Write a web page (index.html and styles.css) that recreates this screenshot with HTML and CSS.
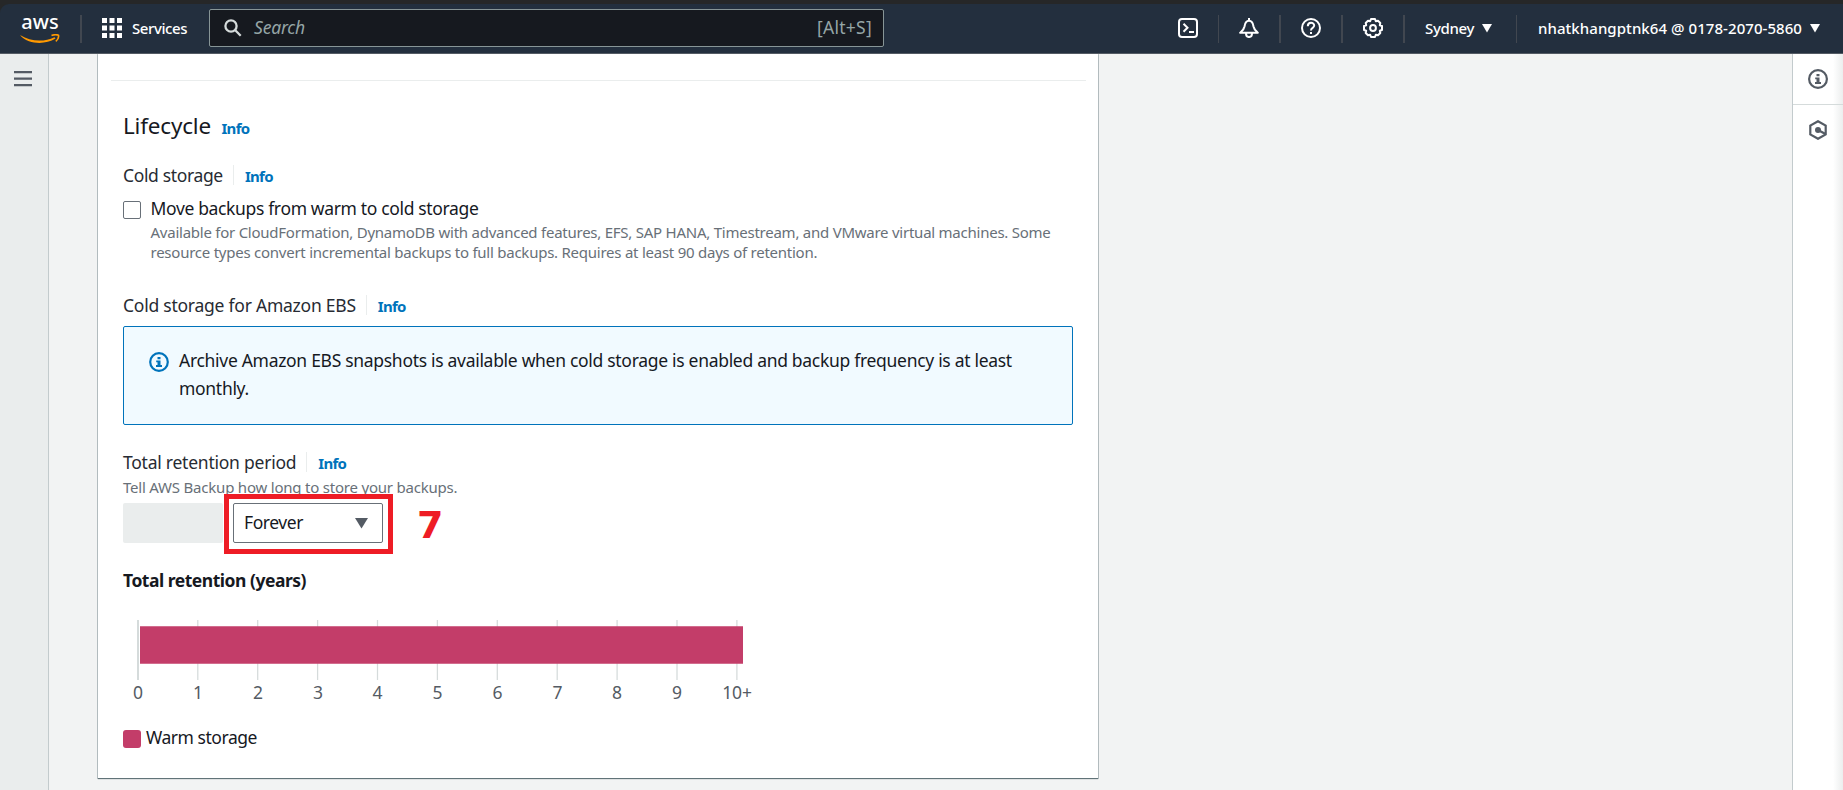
FILE: index.html
```html
<!DOCTYPE html>
<html lang="en">
<head>
<meta charset="utf-8">
<title>AWS Backup</title>
<link rel="stylesheet" href="styles.css">
</head>
<body>
<div class="strip">
<header class="header">
  <div class="logo">
    <span class="logo-text">aws</span>
    <svg class="logo-smile" width="40" height="10" viewBox="0 0 40 10"><path d="M0.5 1.2C10 7.500 24 8.500 34.500 3.200L35.500 4.600C25 11 9 10.500 0.500 1.800Z" fill="#f90"/><path d="M31.500 1.600C34 .6 37 .5 38.500 1.200C38.900 3.300 37.800 5.800 35.800 7.300" fill="none" stroke="#f90" stroke-width="1.600"/></svg>
  </div>
  <i class="sep wide sep-logo"></i>
  <svg class="grid-icon" width="20" height="20" viewBox="0 0 20 20" fill="#fff"><path d="M0 0h5v5H0zM7.500 0h5v5h-5zM15 0h5v5h-5zM0 7.500h5v5H0zM7.500 7.500h5v5h-5zM15 7.500h5v5h-5zM0 15h5v5H0zM7.500 15h5v5h-5zM15 15h5v5h-5z"/></svg>
  <span class="nav-text services">Services</span>
  <div class="search">
    <svg width="18" height="18" viewBox="0 0 18 18" fill="none" stroke="#d5dbdb" stroke-width="2.300"><circle cx="7" cy="7" r="5.600"/><path d="M11 11l5.700 5.700"/></svg>
    <span class="placeholder">Search</span>
    <span class="shortcut">[Alt+S]</span>
  </div>
  <div class="tools">
    <div class="tool first"><svg width="20" height="20" viewBox="0 0 20 20" fill="none" stroke="#fff" stroke-width="2"><rect x="1" y="1" width="18" height="18" rx="3"/><path d="M5.500 5.800L9.500 9.800L5.500 13.800M11 14h5"/></svg></div>
    <i class="sep"></i>
    <div class="tool"><svg width="20" height="20" viewBox="0 0 20 20" fill="none" stroke="#fff" stroke-width="2" stroke-linejoin="round"><path d="M10 0v3M1.200 14.800H18.800C16 12.500 15 11.500 14.500 8.500C14 4.800 12.800 2.800 10 2.800S6 4.800 5.500 8.500C5 11.500 4 12.500 1.200 14.800ZM7 15.500C7 20.200 13 20.200 13 15.500"/></svg></div>
    <i class="sep wide"></i>
    <div class="tool"><svg width="20" height="20" viewBox="0 0 20 20" fill="none" stroke="#fff" stroke-width="2"><circle cx="10" cy="10" r="9"/><path d="M6.800 8.200C6.800 3.800 13.200 3.800 13.200 7.600C13.200 10 10 9.800 10 12.400M10 14v2.100"/></svg></div>
    <i class="sep wide"></i>
    <div class="tool"><svg width="20" height="20" viewBox="0 0 20 20" fill="none" stroke="#fff" stroke-width="2" stroke-linejoin="round"><path d="M8 1h4l.8 2.200L15 2.700L17.300 5L16.800 7.200L19 8v4l-2.200.8L17.300 15L15 17.300L12.800 16.800L12 19H8l-.8-2.200L5 17.300L2.700 15L3.200 12.800L1 12V8l2.200-.8L2.700 5L5 2.700L7.200 3.200Z"/><circle cx="10" cy="10" r="2.900"/></svg></div>
    <i class="sep wide"></i>
    <div class="region"><span class="nav-text">Sydney</span><svg width="10" height="9" viewBox="0 0 10 9"><path d="M0 0h10L5 8.500z" fill="#fff"/></svg></div>
    <i class="sep"></i>
    <div class="account"><span class="nav-text user">nhatkhangptnk64 @ 0178-2070-5860</span><svg width="10" height="9" viewBox="0 0 10 9"><path d="M0 0h10L5 8.500z" fill="#fff"/></svg></div>
  </div>
</header>
</div>
<div class="page">
  <nav class="side"><svg width="18" height="16" viewBox="0 0 18 16" fill="#545b64"><path d="M0 0h18v2.200H0zM0 6.500h18v2.200H0zM0 13h18v2.200H0z"/></svg></nav>
  <main class="main">
    <section class="card">
      <hr class="rule">
      <div class="content">
        <div class="row title"><h2>Lifecycle</h2><a class="info">Info</a></div>
        <div class="row cold"><span class="label">Cold storage</span><i class="bar"></i><a class="info">Info</a></div>
        <div class="check">
          <span class="box"></span>
          <div>
            <div class="check-label">Move backups from warm to cold storage</div>
            <div class="desc">Available for CloudFormation, DynamoDB with advanced features, EFS, SAP HANA, Timestream, and VMware virtual machines. Some<br>resource types convert incremental backups to full backups. Requires at least 90 days of retention.</div>
          </div>
        </div>
        <div class="row ebs"><span class="label">Cold storage for Amazon EBS</span><i class="bar"></i><a class="info">Info</a></div>
        <div class="alert">
          <svg width="20" height="20" viewBox="0 0 20 20"><circle cx="10" cy="10" r="8.800" fill="none" stroke="#0073bb" stroke-width="2.200"/><path d="M8.500 5h3v2.300h-3zM7.200 8.400h4.300v4.700H13V15H7v-1.900h1.500v-2.800H7.200z" fill="#0073bb"/></svg>
          <p>Archive Amazon EBS snapshots is available when cold storage is enabled and backup frequency is at least<br>monthly.</p>
        </div>
        <div class="row period"><span class="label">Total retention period</span><i class="bar"></i><a class="info">Info</a></div>
        <div class="help">Tell AWS Backup how long to store your backups.</div>
        <div class="fields">
          <div class="disabled"></div>
          <div class="select"><span>Forever</span><svg width="13" height="11" viewBox="0 0 13 11"><path d="M0 0h13L6.500 10.500z" fill="#545b64"/></svg>
            <div class="mark"></div>
            <div class="step">7</div>
          </div>
        </div>
        <h3>Total retention (years)</h3>
        <svg class="chart" width="640" height="90" viewBox="0 0 640 90">
          <path d="M15 0v60" stroke="#d5dbdb" stroke-width="2"/>
          <path d="M74.800 0v60M134.700 0v60M194.600 0v60M254.500 0v60M314.400 0v60M374.300 0v60M434.200 0v60M494.100 0v60M554 0v60M613.900 0v60" stroke="#d5dbdb" stroke-width="1.250"/>
          <path d="M17 6.250h603v37.500H17z" fill="#c33d69"/>
          <g class="ticks"><text x="15" y="79">0</text><text x="75" y="79">1</text><text x="135" y="79">2</text><text x="195" y="79">3</text><text x="254.500" y="79">4</text><text x="314.500" y="79">5</text><text x="374.500" y="79">6</text><text x="434.500" y="79">7</text><text x="494" y="79">8</text><text x="554" y="79">9</text><text x="614" y="79">10+</text></g>
        </svg>
        <div class="legend"><i></i><span>Warm storage</span></div>
      </div>
    </section>
  </main>
  <aside class="panel">
    <div class="panel-item"><svg width="20" height="20" viewBox="0 0 20 20"><circle cx="10" cy="10" r="8.900" fill="none" stroke="#545b64" stroke-width="2.200"/><path d="M8.500 5h3v2.300h-3zM7.200 8.400h4.300v4.700H13V15H7v-1.900h1.500v-2.800H7.200z" fill="#545b64"/></svg></div>
    <div class="panel-item"><svg width="20" height="20" viewBox="0 0 20 20"><path d="M10 1.200L17.700 5.600V14.400L10 18.800L2.300 14.400V5.600Z" fill="none" stroke="#545b64" stroke-width="2.200"/><circle cx="10" cy="10" r="3" fill="#545b64"/><path d="M10 10L17.500 14" stroke="#545b64" stroke-width="2.400"/></svg></div>
  </aside>
</div>
</body>
</html>
```
FILE: styles.css
```css
* { box-sizing: border-box; }
html, body { margin: 0; height: 790px; overflow: hidden; }
body { font-family: "Noto Sans", "Open Sans", sans-serif; font-size: 17.5px; line-height: 28px; color: #16191f; background: #f2f3f3; }
svg { display: block; flex: none; }
h2, h3, p { margin: 0; font-weight: 400; }
span, .info { white-space: nowrap; }

.strip { height: 54px; padding-top: 4px; background: #262728; }
.header { display: flex; align-items: center; height: 50px; background: #232f3e; border-bottom: 1px solid #545b64; border-top-left-radius: 9px; padding: 0 23px 0 20px; color: #fff; }
.logo { width: 40px; height: 36px; }
.logo-text { display: block; height: 24px; line-height: 24px; font-size: 20px; font-weight: 500; text-align: center; margin-top: -1px; }
.logo-smile { margin-top: 0; }
.sep { display: block; flex: none; width: 1px; height: 28px; background: #414750; }
.wide { width: 2px; }
.sep-logo { margin: 0 20px; }
.grid-icon { margin-bottom: 1px; }
.nav-text { font-size: 15px; font-weight: 500; letter-spacing: -.35px; line-height: 20px; margin-bottom: 2px; }
.services { margin-left: 10px; width: 66px; letter-spacing: -.43px; }
.search { display: flex; align-items: center; width: 675px; height: 38px; margin: 0 0 1px 11px; padding: 0 11px 0 14px; border: 1px solid #879596; border-radius: 2px; background: #16191f; color: #95a5a6; }
.placeholder { margin: 0 0 2px 12px; font-style: italic; letter-spacing: -.2px; }
.shortcut { margin: 0 0 2px auto; letter-spacing: .26px; }
.tools { display: flex; align-items: center; margin-left: auto; }
.tool { width: 60px; padding: 0 0 1px 20px; }
.first { padding-left: 19px; width: 59px; margin-right: 0; }
.region { display: flex; align-items: center; width: 111px; padding-left: 20px; gap: 8px; }
.account { display: flex; align-items: center; padding-left: 21px; gap: 8px; }
.user { letter-spacing: .06px; }

.page { display: flex; height: 736px; }
.side { width: 49px; padding: 17px 0 0 14px; background: #eaeded; border-right: 1px solid #c3cbcd; }
.main { flex: 1; padding-left: 49px; clip-path: inset(0); }
.card { width: 1000px; height: 724px; padding: 26px 12px 0 13px; background: #fff; box-shadow: 0 1px 1px 0 rgba(0, 28, 36, .5), 0 0 0 1px #c3cbcd; }
.rule { height: 1px; margin: 0; border: 0; background: #eaeded; }
.content { padding: 30px 12px 0; }
.row { display: flex; align-items: baseline; height: 28px; }
.info { font-size: 15px; font-weight: 700; color: #0073bb; letter-spacing: -.7px; }
.label { color: #272b33; letter-spacing: -.24px; }
.bar { align-self: center; width: 1px; height: 20px; margin: 0 11px 0 10px; background: #eaeded; }
.title { height: 30px; }
.title h2 { font-size: 22.500px; line-height: 30px; letter-spacing: -.18px; margin-right: 10.500px; }
.cold { margin-top: 20px; }
.cold .label { letter-spacing: -.35px; }
.check { display: flex; gap: 9.500px; margin-top: 5px; }
.box { width: 18px; height: 18px; margin-top: 7px; border: 1px solid #687078; border-radius: 2px; }
.check-label { letter-spacing: -.35px; }
.desc { font-size: 15px; line-height: 20px; color: #687078; letter-spacing: -.245px; white-space: nowrap; }
.ebs { margin-top: 29px; }
.alert { display: flex; gap: 10px; width: 950px; height: 99px; margin-top: 7px; padding: 19px 25px; border: 1px solid #0073bb; border-radius: 2px; background: #f1faff; }
.alert svg { margin-top: 6px; }
.alert p { letter-spacing: -.3px; white-space: nowrap; }
.period { margin-top: 23px; }
.help { margin-top: 1px; font-size: 15px; line-height: 20px; color: #687078; letter-spacing: -.21px; }
.fields { display: flex; gap: 10px; margin-top: 6px; }
.disabled { width: 100px; height: 40px; border-radius: 2px; background: #eaeded; }
.select { position: relative; display: flex; align-items: center; justify-content: space-between; width: 150px; height: 40px; padding: 0 14px 3px 10px; border: 1px solid #687078; border-radius: 2px; letter-spacing: -.44px; }
.select svg { margin-top: 3px; }
.mark { position: absolute; left: -10px; top: -10px; width: 169px; height: 60px; border: 5px solid #ee1c25; }
.step { position: absolute; left: 183px; top: 1px; font: 700 38px/40px "DejaVu Sans", sans-serif; letter-spacing: 0; color: #ee1c25; }
h3 { margin-top: 23px; font-size: 17.500px; font-weight: 700; letter-spacing: -.48px; }
.chart { margin-top: 26px; }
.ticks { fill: #545b64; text-anchor: middle; letter-spacing: -.2px; }
.legend { display: flex; gap: 5px; margin-top: 13px; letter-spacing: -.46px; }
.legend i { width: 18px; height: 18px; margin-top: 7px; border-radius: 3px; background: #c33d69; }

.panel { width: 51px; border-left: 1px solid #c3cbcd; background: linear-gradient(90deg, #fff 80%, #eceeee); }
.panel-item { height: 51px; padding: 15px; border-bottom: 1px solid #d5dbdb; }
.panel-item:last-child { border: 0; }
```
